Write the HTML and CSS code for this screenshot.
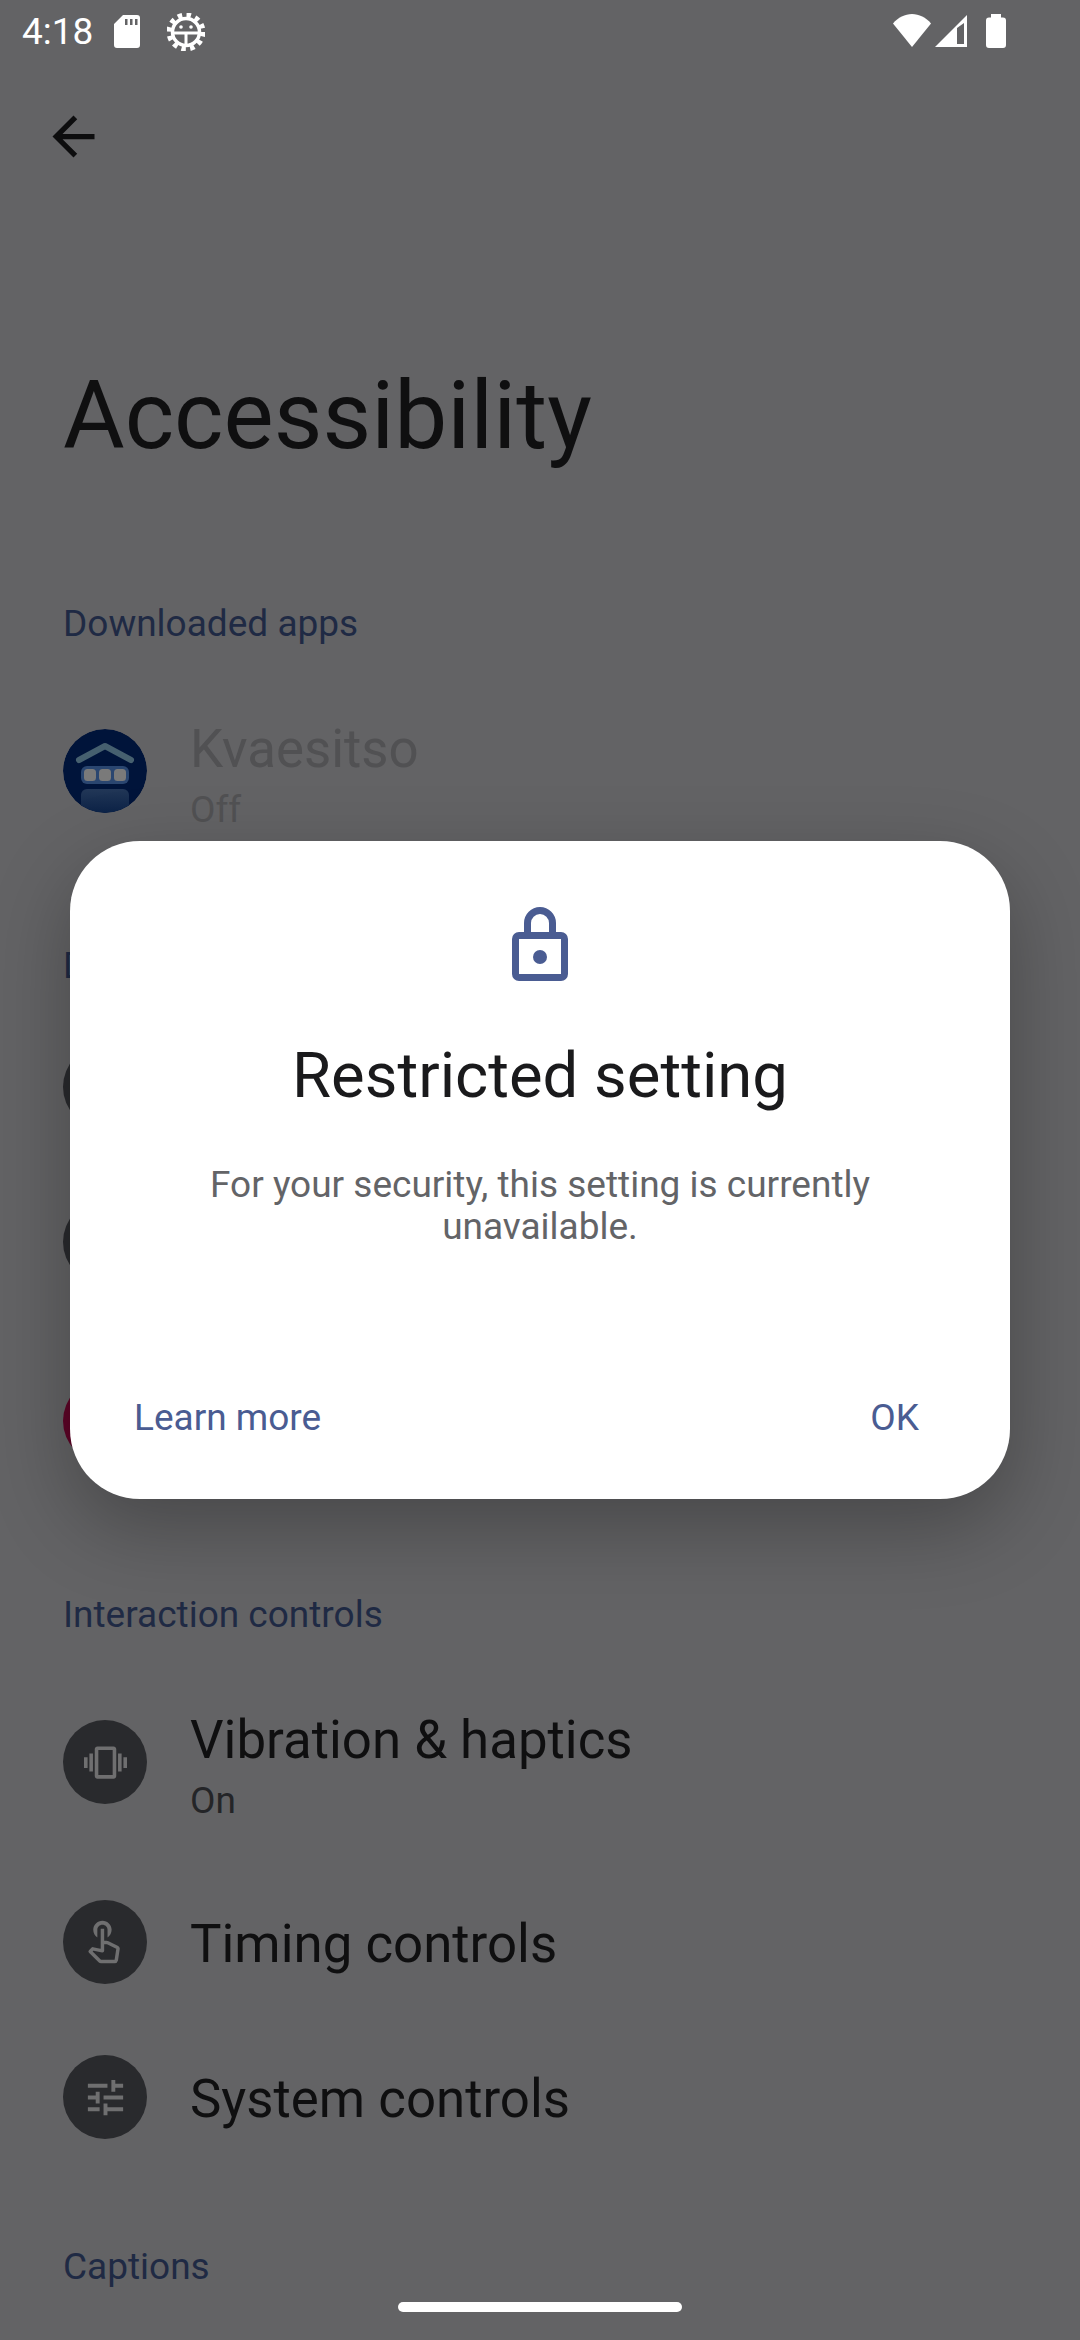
FILE: index.html
```html
<!DOCTYPE html>
<html lang="en">
<head>
  <meta charset="UTF-8" />
  <meta name="viewport" content="width=device-width, initial-scale=1.0" />
  <title>Accessibility</title>
  <link rel="stylesheet" href="styles.css">
</head>
<body>
  <div class="statusBar">
    <span class="clock">4:18</span>
    <svg class="sdIcon" width="26" height="33" viewBox="0 0 26 33"><path fill-rule="evenodd" d="M9 0H23a3 3 0 0 1 3 3V30a3 3 0 0 1-3 3H3a3 3 0 0 1-3-3V9zM11 4v6h2.500V4zM16 4v6h2.500V4zM21 4v6h2.500V4z"/></svg>
    <svg class="gearIcon" width="38" height="38" viewBox="0 0 38 38">
      <g fill="none" stroke="#fff">
        <circle cx="19" cy="19" r="16" stroke-width="7" stroke-dasharray="4.200 4.180"/>
        <circle cx="19" cy="19" r="13.500" stroke-width="3.500"/>
        <path d="M6 20H32M19 20V32" stroke-width="3"/>
      </g>
      <circle cx="14" cy="14" r="1.800" fill="#fff"/>
      <circle cx="24" cy="14" r="1.800" fill="#fff"/>
    </svg>
    <span class="spacer"></span>
    <svg class="wifiIcon" width="38" height="33" viewBox="0 0 38 33"><path d="M19 33L0 9.500C5 3.500 12 0 19 0s14 3.500 19 9.500z"/></svg>
    <svg class="signalIcon" width="32" height="32" viewBox="0 0 32 32"><path fill-rule="evenodd" d="M32 0V32H0zM22 13V29h7V8z"/></svg>
    <svg class="batteryIcon" width="20" height="34" viewBox="0 0 20 34"><path d="M5 0h10v3.500h2a3 3 0 0 1 3 3V31a3 3 0 0 1-3 3H3a3 3 0 0 1-3-3V6.500a3 3 0 0 1 3-3h2z"/></svg>
  </div>

  <div class="appBar">
    <svg width="63" height="63" viewBox="0 0 24 24"><path d="M20 11H7.830l5.590-5.590L12 4l-8 8 8 8 1.410-1.410L7.830 13H20v-2z"/></svg>
  </div>

  <h1 class="pageTitle">Accessibility</h1>

  <div class="sectionHead">Downloaded apps</div>
  <div class="row rowTall">
    <svg class="rowIcon" width="84" height="84" viewBox="0 0 84 84">
      <defs>
        <clipPath id="appClip"><circle cx="42" cy="42" r="42"/></clipPath>
        <linearGradient id="appFade" x1="0" y1="0" x2="0" y2="1">
          <stop offset="0" stop-color="#223757"/>
          <stop offset="1" stop-color="#031a40"/>
        </linearGradient>
      </defs>
      <circle cx="42" cy="42" r="42" fill="#00143a"/>
      <path d="M16 31L42 17L68 31" fill="none" stroke="#46606f" stroke-width="6" stroke-linecap="round" stroke-linejoin="round"/>
      <rect x="18" y="37" width="48" height="18" rx="6" fill="#2a4670"/>
      <rect x="21" y="40" width="12" height="12" rx="3.500" fill="#7a7a7a"/>
      <rect x="36" y="40" width="12" height="12" rx="3.500" fill="#7a7a7a"/>
      <rect x="51" y="40" width="12" height="12" rx="3.500" fill="#7a7a7a"/>
      <rect x="18" y="60" width="48" height="34" rx="6" fill="url(#appFade)" clip-path="url(#appClip)"/>
    </svg>
    <div class="rowText">
      <div class="rowTitle disabled">Kvaesitso</div>
      <div class="rowSub disabled">Off</div>
    </div>
  </div>

  <!-- only the first letter shows beside the dialog -->
  <div class="sectionHead shortHead">Display</div>
  <div class="row">
    <div class="rowIcon iconDark"></div>
  </div>
  <div class="row">
    <div class="rowIcon iconDark"></div>
  </div>
  <div class="row rowTall rowHidden">
    <div class="rowIcon iconRed"></div>
  </div>

  <div class="sectionHead">Interaction controls</div>
  <div class="row rowTall">
    <div class="rowIcon iconDark">
      <svg width="43" height="43" viewBox="0 0 24 24"><path d="M0 15h2V9H0v6zm3 2h2V7H3v10zm19-8v6h2V9h-2zm-3 8h2V7h-2v10zM16.500 3h-9C6.670 3 6 3.670 6 4.500v15c0 .83.67 1.500 1.500 1.500h9c.83 0 1.500-.67 1.500-1.500v-15c0-.83-.67-1.500-1.500-1.500zM16 19H8V5h8v14z"/></svg>
    </div>
    <div class="rowText">
      <div class="rowTitle">Vibration &amp; haptics</div>
      <div class="rowSub">On</div>
    </div>
  </div>
  <div class="row">
    <div class="rowIcon iconDark">
      <svg width="49" height="49" viewBox="1 1.700 24 24">
        <path d="M9 11.240V7.500C9 6.120 10.120 5 11.500 5S14 6.120 14 7.500v3.740c1.210-.81 2-2.180 2-3.740C16 5.010 13.990 3 11.500 3S7 5.010 7 7.500c0 1.560.79 2.930 2 3.740z"/>
        <path d="M11.500 7v10.800l-4.700-1-1.300 1.300 4.700 4.700c.2.200.4.200.6.200h6.700c.4 0 .7-.3.8-.7l.8-5.300c.1-.4-.1-.8-.5-1l-4.500-2.200c-.2-.1-.4-.1-.6-.1h-2V7" fill="none" stroke="#6f6f70" stroke-width="1.700" stroke-linejoin="round"/>
      </svg>
    </div>
    <div class="rowTitle singleTitle">Timing controls</div>
  </div>
  <div class="row">
    <div class="rowIcon iconDark">
      <svg width="47" height="47" viewBox="0 0 24 24"><path d="M3 17v2h6v-2H3zM3 5v2h10V5H3zm10 16v-2h8v-2h-8v-2h-2v6h2zM7 9v2H3v2h4v2h2V9H7zm14 4v-2H11v2h10zm-6-4h2V7h4V5h-4V3h-2v6z"/></svg>
    </div>
    <div class="rowTitle singleTitle">System controls</div>
  </div>

  <div class="sectionHead">Captions</div>

  <div class="dialog">
    <svg class="lockIcon" width="56" height="74" viewBox="0 0 56 74">
      <path d="M12 25V16a16 16 0 0 1 32 0v9h-7V16a9 9 0 0 0-18 0v9z"/>
      <path fill-rule="evenodd" d="M7 25h42a7 7 0 0 1 7 7v35a7 7 0 0 1-7 7H7a7 7 0 0 1-7-7V32a7 7 0 0 1 7-7zM7 32v35h42V32z"/>
      <circle cx="28" cy="50" r="7"/>
    </svg>
    <h2 class="dialogTitle">Restricted setting</h2>
    <p class="dialogText">For your security, this setting is currently unavailable.</p>
    <div class="dialogButtons">
      <span>Learn more</span>
      <span>OK</span>
    </div>
  </div>

  <div class="homeBar"></div>
</body>
</html>
```
FILE: styles.css
```css
body {
  margin: 0;
  width: 1080px;
  height: 2340px;
  overflow: hidden;
  position: relative;
  font-family: Roboto, sans-serif;
  background: #636365;
  color: #0f0f10;
}

.statusBar {
  height: 63px;
  display: flex;
  align-items: flex-start;
  padding: 0 74px 0 22px;
  box-sizing: border-box;
  fill: #fff;
}

.clock {
  font-size: 37px;
  line-height: 63px;
  color: #fff;
  width: 92px;
}

.spacer { flex: 1; }

.sdIcon { margin-top: 15px; }
.gearIcon { margin: 13px 0 0 27px; }
.wifiIcon { margin-top: 14px; }
.signalIcon { margin: 15px 0 0 4px; }
.batteryIcon { margin: 14px 0 0 19px; }

.appBar {
  height: 146px;
  display: flex;
  align-items: center;
  padding-left: 42px;
  fill: #0d0d0e;
}

.pageTitle {
  margin: 0;
  height: 322.5px;
  padding: 146px 0 0 63px;
  box-sizing: border-box;
  font-size: 94.5px;
  line-height: 122px;
  font-weight: 400;
}

.sectionHead {
  height: 137px;
  padding: 68px 0 0 63px;
  box-sizing: border-box;
  font-size: 37px;
  line-height: 48px;
  color: #1f2a44;
}

.shortHead {
  height: 136px;
  width: 70px;
  overflow: hidden;
  white-space: nowrap;
}

.row {
  height: 155px;
  display: flex;
  align-items: center;
  gap: 43px;
  padding-left: 63px;
}

.rowTall { height: 205px; }
.rowHidden { height: 203px; }

.rowText { padding-top: 9px; }

.rowIcon {
  width: 84px;
  height: 84px;
  flex: none;
  border-radius: 50%;
  display: flex;
  align-items: center;
  justify-content: center;
  fill: #6f6f70;
}

.iconDark { background: #292a2d; }
.iconRed { background: #5e0427; }

.rowTitle {
  font-size: 52.8px;
  line-height: 60px;
}

.singleTitle { padding-top: 4px; }

.rowSub {
  font-size: 37px;
  line-height: 46px;
  margin-top: 8px;
  color: #242528;
}

.disabled { color: #515153; }

/* dialog sits over the list */
.dialog {
  position: absolute;
  left: 70px;
  top: 841px;
  width: 940px;
  height: 658px;
  box-sizing: border-box;
  padding: 66px 0 0;
  background: #fff;
  border-radius: 70px;
  box-shadow: 0 28px 80px rgba(0, 0, 0, 0.28);
  text-align: center;
}

.lockIcon {
  display: block;
  margin: 0 auto;
  fill: #4a5c92;
}

.dialogTitle {
  margin: 56px 0 0;
  font-size: 63.4px;
  line-height: 76px;
  font-weight: 400;
  color: #1a1a1c;
}

.dialogText {
  margin: 51px 100px 0;
  font-size: 37px;
  line-height: 42px;
  color: #636467;
}

.dialogButtons {
  position: absolute;
  left: 64px;
  right: 91px;
  top: 552px;
  display: flex;
  justify-content: space-between;
  font-size: 37px;
  line-height: 50px;
  color: #4a5c92;
}

.homeBar {
  position: absolute;
  left: 398px;
  top: 2302px;
  width: 284px;
  height: 10px;
  border-radius: 5px;
  background: #fff;
}
```
